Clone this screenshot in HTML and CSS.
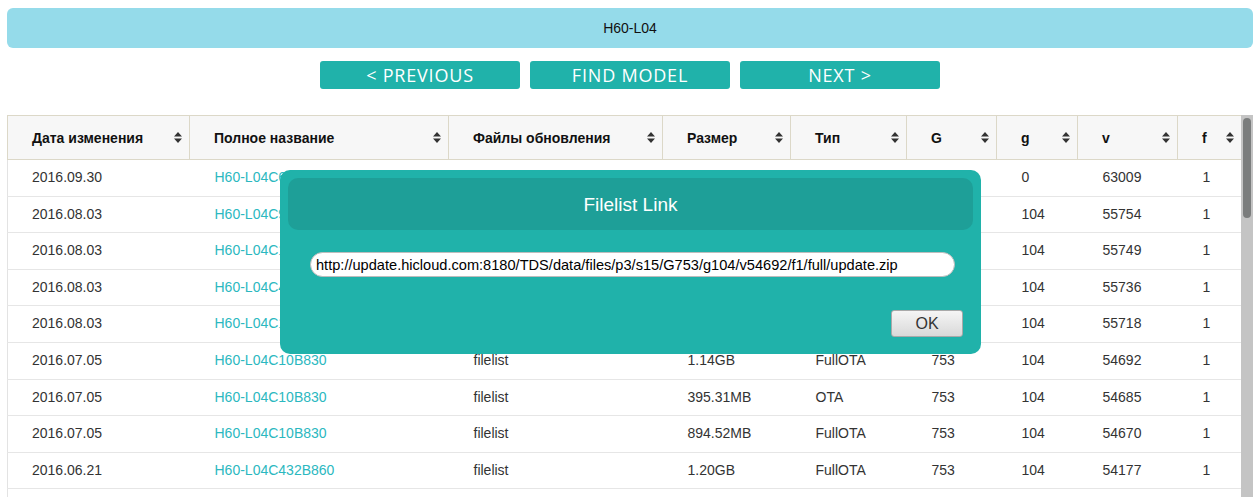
FILE: index.html
```html
<!DOCTYPE html>
<html lang="ru">
<head>
<meta charset="utf-8">
<title>H60-L04</title>
<link rel="stylesheet" href="styles.css">
</head>
<body>
<div class="page">
  <div class="topbar">H60-L04</div>
  <div class="nav">
    <button class="btn">&lt; PREVIOUS</button>
    <button class="btn">FIND MODEL</button>
    <button class="btn">NEXT &gt;</button>
  </div>
  <div class="table-wrap">
    <div class="scroll">
      <table class="grid">
        <colgroup>
          <col style="width:182px"><col style="width:259px"><col style="width:214px"><col style="width:128px"><col style="width:116px"><col style="width:90px"><col style="width:81px"><col style="width:100px"><col style="width:64px">
        </colgroup>
        <thead>
          <tr>
            <th><div class="th-in"><span>Дата изменения</span><svg class="sort" viewBox="0 0 8 11"><path d="M0 4.5L4 0L8 4.5Z M0 6.5L4 11L8 6.5Z"/></svg></div></th>
            <th><div class="th-in"><span>Полное название</span><svg class="sort" viewBox="0 0 8 11"><path d="M0 4.5L4 0L8 4.5Z M0 6.5L4 11L8 6.5Z"/></svg></div></th>
            <th><div class="th-in"><span>Файлы обновления</span><svg class="sort" viewBox="0 0 8 11"><path d="M0 4.5L4 0L8 4.5Z M0 6.5L4 11L8 6.5Z"/></svg></div></th>
            <th><div class="th-in"><span>Размер</span><svg class="sort" viewBox="0 0 8 11"><path d="M0 4.5L4 0L8 4.5Z M0 6.5L4 11L8 6.5Z"/></svg></div></th>
            <th><div class="th-in"><span>Тип</span><svg class="sort" viewBox="0 0 8 11"><path d="M0 4.5L4 0L8 4.5Z M0 6.5L4 11L8 6.5Z"/></svg></div></th>
            <th><div class="th-in"><span>G</span><svg class="sort" viewBox="0 0 8 11"><path d="M0 4.5L4 0L8 4.5Z M0 6.5L4 11L8 6.5Z"/></svg></div></th>
            <th><div class="th-in"><span>g</span><svg class="sort" viewBox="0 0 8 11"><path d="M0 4.5L4 0L8 4.5Z M0 6.5L4 11L8 6.5Z"/></svg></div></th>
            <th><div class="th-in"><span>v</span><svg class="sort" viewBox="0 0 8 11"><path d="M0 4.5L4 0L8 4.5Z M0 6.5L4 11L8 6.5Z"/></svg></div></th>
            <th><div class="th-in"><span>f</span><svg class="sort" viewBox="0 0 8 11"><path d="M0 4.5L4 0L8 4.5Z M0 6.5L4 11L8 6.5Z"/></svg></div></th>
          </tr>
        </thead>
        <tbody>
          <tr><td>2016.09.30</td><td><a href="#">H60-L04C636B866</a></td><td>filelist</td><td>1.26GB</td><td>FullOTA</td><td>753</td><td>0</td><td>63009</td><td>1</td></tr>
          <tr><td>2016.08.03</td><td><a href="#">H60-L04C900B866</a></td><td>filelist</td><td>1.22GB</td><td>FullOTA</td><td>753</td><td>104</td><td>55754</td><td>1</td></tr>
          <tr><td>2016.08.03</td><td><a href="#">H60-L04C185B866</a></td><td>filelist</td><td>1.22GB</td><td>FullOTA</td><td>753</td><td>104</td><td>55749</td><td>1</td></tr>
          <tr><td>2016.08.03</td><td><a href="#">H60-L04C432B866</a></td><td>filelist</td><td>1.22GB</td><td>FullOTA</td><td>753</td><td>104</td><td>55736</td><td>1</td></tr>
          <tr><td>2016.08.03</td><td><a href="#">H60-L04C10B866</a></td><td>filelist</td><td>1.22GB</td><td>FullOTA</td><td>753</td><td>104</td><td>55718</td><td>1</td></tr>
          <tr><td>2016.07.05</td><td><a href="#">H60-L04C10B830</a></td><td>filelist</td><td>1.14GB</td><td>FullOTA</td><td>753</td><td>104</td><td>54692</td><td>1</td></tr>
          <tr><td>2016.07.05</td><td><a href="#">H60-L04C10B830</a></td><td>filelist</td><td>395.31MB</td><td>OTA</td><td>753</td><td>104</td><td>54685</td><td>1</td></tr>
          <tr><td>2016.07.05</td><td><a href="#">H60-L04C10B830</a></td><td>filelist</td><td>894.52MB</td><td>FullOTA</td><td>753</td><td>104</td><td>54670</td><td>1</td></tr>
          <tr><td>2016.06.21</td><td><a href="#">H60-L04C432B860</a></td><td>filelist</td><td>1.20GB</td><td>FullOTA</td><td>753</td><td>104</td><td>54177</td><td>1</td></tr>
          <tr><td>2016.06.21</td><td><a href="#">H60-L04C432B860</a></td><td>filelist</td><td>412.08MB</td><td>OTA</td><td>753</td><td>104</td><td>54170</td><td>1</td></tr>
        </tbody>
      </table>
    </div>
    <div class="vscroll" aria-hidden="true"><div class="thumb"></div></div>
  </div>
</div>

<div class="dialog" role="dialog" aria-label="Filelist Link">
  <div class="dialog-title">Filelist Link</div>
  <input class="dialog-input" type="text" readonly value="http://update.hicloud.com:8180/TDS/data/files/p3/s15/G753/g104/v54692/f1/full/update.zip">
  <div class="dialog-actions">
    <button class="ok">OK</button>
  </div>
</div>
</body>
</html>
```

FILE: styles.css
```css
html, body {
  margin: 0;
  padding: 0;
  background: #ffffff;
  overflow: hidden;
}

body {
  font-family: "Liberation Sans", Arial, sans-serif;
  font-size: 14px;
  color: #333333;
}

.page {
  padding: 8px 6px 0 7px;
}

.topbar {
  height: 40px;
  background: #95dbea;
  border-radius: 6px;
  display: flex;
  align-items: center;
  justify-content: center;
  font-size: 14px;
  color: #111111;
}

.nav {
  margin-top: 13px;
  display: flex;
  justify-content: center;
  gap: 10px;
}

.btn {
  width: 200px;
  height: 28px;
  padding: 0;
  border: none;
  border-radius: 3px;
  background: #20b2aa;
  color: #ffffff;
  font-family: "Open Sans", "Noto Sans", sans-serif;
  font-size: 18px;
  letter-spacing: 0.8px;
  line-height: 28px;
}

.table-wrap {
  margin-top: 26px;
  height: calc(100vh - 115px);
  display: flex;
}

.scroll {
  flex: 1;
  overflow: hidden;
}

.vscroll {
  width: 12px;
  flex: none;
  box-sizing: border-box;
  padding: 3px 2px 0 2px;
  background: #c4c4c4;
}

.thumb {
  height: 100px;
  border-radius: 4px;
  background: #7b7d7d;
}

.grid {
  width: 1234px;
  border-collapse: collapse;
  table-layout: fixed;
}

.grid th {
  height: 44px;
  padding: 0 7px 0 24px;
  background: #f7f7f7;
  border: 1px solid #dcd8c8;
  text-align: left;
  font-weight: bold;
  font-size: 14px;
  color: #111111;
  box-sizing: border-box;
}

.th-in {
  display: flex;
  align-items: center;
  justify-content: space-between;
}

.sort {
  width: 8px;
  height: 11px;
  fill: #333333;
  flex: none;
}

.grid td {
  padding: 8px 24px 8px 25px;
  line-height: 19.6px;
  border-bottom: 1px solid #e6e6e6;
  color: #333333;
  white-space: nowrap;
  overflow: hidden;
}

.grid td:first-child {
  border-left: 1px solid #e3e3e3;
  padding-left: 24px;
}

.grid td:last-child {
  border-right: 1px solid #e3e3e3;
}

.grid a {
  color: #2bb8c0;
  text-decoration: none;
}

.dialog {
  position: absolute;
  left: 280px;
  top: 170px;
  width: 701px;
  height: 184px;
  box-sizing: border-box;
  padding: 8px;
  background: #20b2aa;
  border-radius: 10px;
}

.dialog-title {
  height: 52px;
  border-radius: 10px;
  background: #1e9f98;
  color: #ffffff;
  font-size: 19px;
  display: flex;
  align-items: center;
  justify-content: center;
  padding-top: 1px;
  box-sizing: border-box;
}

.dialog-input {
  display: block;
  margin: 22px 0 0 22px;
  width: 645px;
  height: 25px;
  box-sizing: border-box;
  border: 1px solid #bdbdbd;
  border-radius: 13px;
  padding: 0 5px;
  background: #ffffff;
  font-family: "Liberation Sans", Arial, sans-serif;
  font-size: 14.6px;
  color: #000000;
  outline: none;
}

.dialog-actions {
  display: flex;
  justify-content: flex-end;
  margin-top: 33px;
  padding-right: 10px;
}

.ok {
  width: 72px;
  height: 27px;
  padding: 0;
  border: 1px solid #a9a9a9;
  border-radius: 3px;
  background: linear-gradient(#f5f5f5, #d9d9d9);
  font-family: "Liberation Sans", Arial, sans-serif;
  font-size: 16px;
  color: #333333;
}
```
